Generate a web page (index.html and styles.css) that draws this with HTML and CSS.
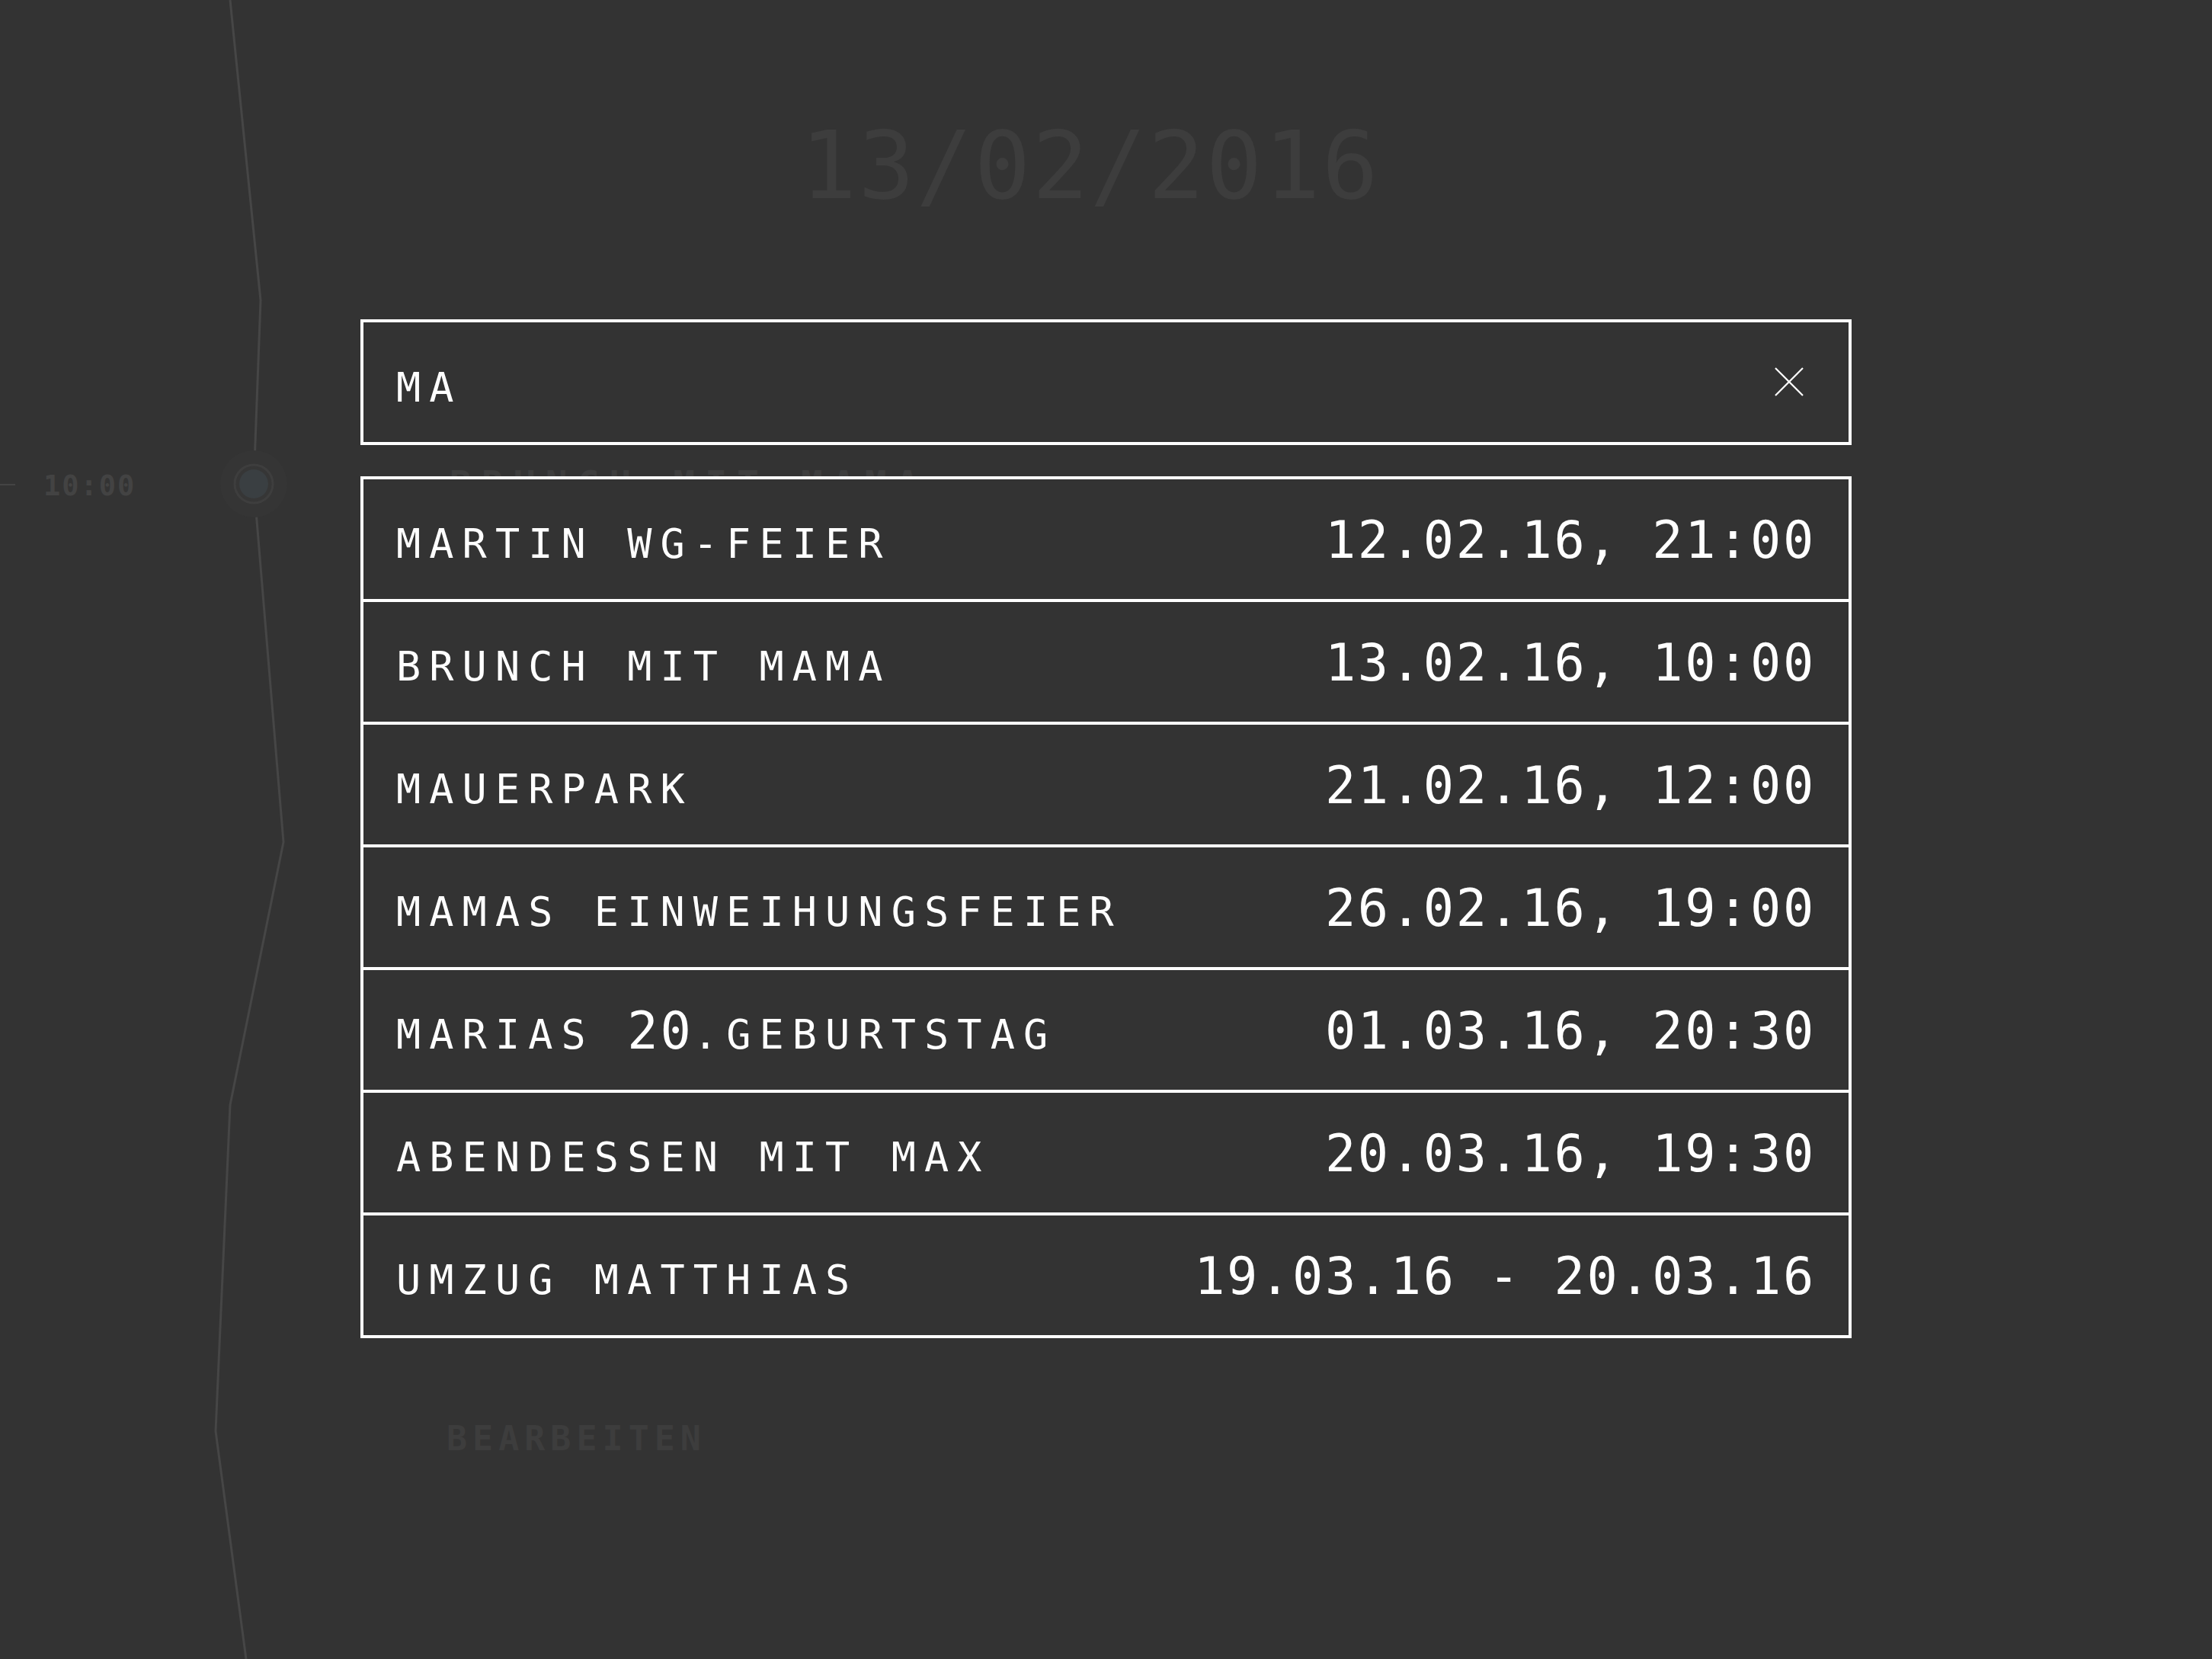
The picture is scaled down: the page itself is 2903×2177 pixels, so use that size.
FILE: index.html
```html
<!DOCTYPE html>
<html lang="de">
<head>
<meta charset="utf-8">
<title>Suche</title>
<link rel="stylesheet" href="styles.css">
</head>
<body>
<div class="backdrop">
  <svg class="timeline" width="2903" height="2177" viewBox="0 0 2903 2177">
    <polyline class="track" points="302,0 342,394 333,635 372,1105 302,1450 283,1878 323,2177"/>
    <line class="tick" x1="0" y1="636" x2="20" y2="636"/>
    <circle class="glow" cx="333" cy="635" r="44"/>
    <circle class="ring" cx="333" cy="635" r="25"/>
    <circle class="dot" cx="333" cy="635" r="19"/>
  </svg>
  <div class="bg-date">13/02/2016</div>
  <div class="ghost ghost-time">10:00</div>
  <div class="ghost ghost-title">BRUNCH MIT MAMA</div>
  <div class="ghost ghost-edit">BEARBEITEN</div>
</div>

<main class="overlay">
  <div class="search">
    <span class="search-text">MA</span>
    <svg class="close" width="40" height="40" viewBox="0 0 40 40">
      <line x1="2" y1="2" x2="38" y2="38"/>
      <line x1="38" y1="2" x2="2" y2="38"/>
    </svg>
  </div>

  <ul class="results">
    <li class="row"><span class="label">MARTIN WG-FEIER</span><span class="when">12.02.16, 21:00</span></li>
    <li class="row"><span class="label">BRUNCH MIT MAMA</span><span class="when">13.02.16, 10:00</span></li>
    <li class="row"><span class="label">MAUERPARK</span><span class="when">21.02.16, 12:00</span></li>
    <li class="row"><span class="label">MAMAS EINWEIHUNGSFEIER</span><span class="when">26.02.16, 19:00</span></li>
    <li class="row"><span class="label">MARIAS <span class="num">20</span>.GEBURTSTAG</span><span class="when">01.03.16, 20:30</span></li>
    <li class="row"><span class="label">ABENDESSEN MIT MAX</span><span class="when">20.03.16, 19:30</span></li>
    <li class="row"><span class="label">UMZUG MATTHIAS</span><span class="when">19.03.16 - 20.03.16</span></li>
  </ul>
</main>
</body>
</html>
```

FILE: styles.css
```css
html, body {
  margin: 0;
  padding: 0;
}

body {
  width: 2903px;
  height: 2177px;
  overflow: hidden;
  background: #333333;
  color: #ffffff;
  font-family: "DejaVu Sans Mono", "Liberation Mono", monospace;
  position: relative;
}

/* ---------- dimmed timeline behind the overlay ---------- */
.backdrop {
  position: absolute;
  inset: 0;
}

.timeline {
  position: absolute;
  left: 0;
  top: 0;
}

.track {
  fill: none;
  stroke: #464646;
  stroke-width: 3;
  stroke-linejoin: round;
}

.tick {
  stroke: #444444;
  stroke-width: 2;
}

.glow {
  fill: #353535;
}

.ring {
  fill: #363636;
  stroke: #3e3e3e;
  stroke-width: 3;
}

.dot {
  fill: #3a3f42;
}

.bg-date {
  padding-top: 146px;
  padding-right: 42px;
  text-align: center;
  font-size: 123px;
  letter-spacing: 2px;
  color: #3d3d3d;
}

.ghost {
  position: absolute;
  font-weight: bold;
  color: #3d3d3d;
  white-space: nowrap;
}

.ghost-time {
  left: 57px;
  top: 616px;
  font-size: 37px;
  letter-spacing: 2px;
  color: #434343;
}

.ghost-title {
  left: 590px;
  top: 607px;
  font-size: 48px;
  letter-spacing: 13px;
  color: #3e3e3e;
}

.ghost-edit {
  left: 586px;
  top: 1861px;
  font-size: 45px;
  letter-spacing: 7px;
}

/* ---------- search overlay ---------- */
.overlay {
  position: relative;
  width: 1957px;
  margin: 0 auto;
  padding-top: 419px;
}

.search {
  box-sizing: border-box;
  height: 165px;
  border: 4px solid #ffffff;
  background: #333333;
  display: flex;
  align-items: baseline;
  justify-content: space-between;
  padding: 54px 58px 0 43px;
}

.search-text {
  font-size: 53.5px;
  letter-spacing: 11.1px;
}

.close {
  align-self: center;
  margin-top: -56px;
  width: 40px;
  height: 40px;
}

.close line {
  stroke: #ffffff;
  stroke-width: 2.2;
}

.results {
  list-style: none;
  margin: 41px 0 0;
  padding: 0;
  border: 4px solid #ffffff;
  background: #333333;
}

.row {
  box-sizing: border-box;
  height: 157px;
  display: flex;
  align-items: baseline;
  justify-content: space-between;
  padding: 41px 43px 0 43px;
  white-space: nowrap;
}

.row + .row {
  border-top: 4px solid #ffffff;
  height: 161px;
}

.label {
  font-size: 53.5px;
  letter-spacing: 11.1px;
}

.num {
  font-size: 67px;
  letter-spacing: 3px;
}

.when {
  font-size: 67px;
  letter-spacing: 2.6px;
}
```
